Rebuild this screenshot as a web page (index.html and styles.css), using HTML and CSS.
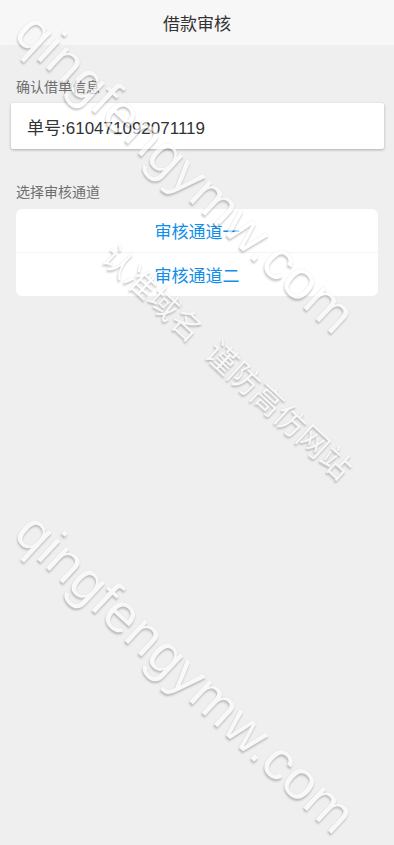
FILE: index.html
```html
<!DOCTYPE html>
<html lang="zh-CN">
<head>
<meta charset="utf-8">
<meta name="viewport" content="width=device-width, initial-scale=1">
<title>借款审核</title>
<link rel="stylesheet" href="styles.css">
</head>
<body>
<div class="page">
  <header class="nav">借款审核</header>
  <div class="section-label first">确认借单信息</div>
  <div class="order-card">单号:610471092071119</div>
  <div class="section-label second">选择审核通道</div>
  <div class="channel-list">
    <div class="channel-item">审核通道一</div>
    <div class="channel-item">审核通道二</div>
  </div>
  <div class="watermark wm-en wm-top">qingfengymw.com</div>
  <div class="watermark wm-cn">认准域名&nbsp;&nbsp;谨防高仿网站</div>
  <div class="watermark wm-en wm-bottom">qingfengymw.com</div>
</div>
</body>
</html>
```

FILE: styles.css
```css
html, body {
  margin: 0;
  padding: 0;
}
body {
  background: #efefef;
  font-family: "Liberation Sans", "Noto Sans CJK SC", sans-serif;
}
.page {
  position: relative;
  min-height: 845px;
  overflow: hidden;
  background: #efefef;
  display: flex;
  flex-direction: column;
}
.nav {
  height: 45px;
  background: #f7f7f7;
  display: flex;
  align-items: center;
  justify-content: center;
  font-size: 17px;
  color: #333;
}
.section-label {
  font-size: 14px;
  line-height: 20px;
  color: #6e6e6e;
  padding: 0 16px;
}
.section-label.first {
  margin-top: 32px;
}
.section-label.second {
  margin-top: 33px;
}
.order-card {
  margin: 6px 10px 0 11px;
  height: 46px;
  background: #fff;
  border-radius: 2px;
  box-shadow: 0 1px 3px rgba(0, 0, 0, 0.28);
  display: flex;
  align-items: center;
  padding-left: 16px;
  font-size: 17px;
  color: #333;
}
.channel-list {
  margin: 7px 16px 0 16px;
  background: #fff;
  border-radius: 6px;
  overflow: hidden;
}
.channel-item {
  height: 43px;
  display: flex;
  align-items: center;
  justify-content: center;
  font-size: 17px;
  color: #108ee9;
}
.channel-item + .channel-item {
  border-top: 1px solid #f4f4f4;
}
.watermark {
  position: absolute;
  white-space: nowrap;
  color: #ffffff;
  opacity: 0.62;
  text-shadow: 1px 2px 2px rgba(0, 0, 0, 0.32), 0 0 1px rgba(0, 0, 0, 0.2);
  transform-origin: 0 50%;
  pointer-events: none;
}
.wm-en {
  font-size: 55px;
  line-height: 56px;
  transform: rotate(43deg);
}
.wm-top {
  left: 25px;
  top: -6px;
}
.wm-bottom {
  left: 25px;
  top: 494px;
}
.wm-cn {
  font-size: 31px;
  line-height: 32px;
  left: 106px;
  top: 236px;
  transform: rotate(42.7deg);
}
```
